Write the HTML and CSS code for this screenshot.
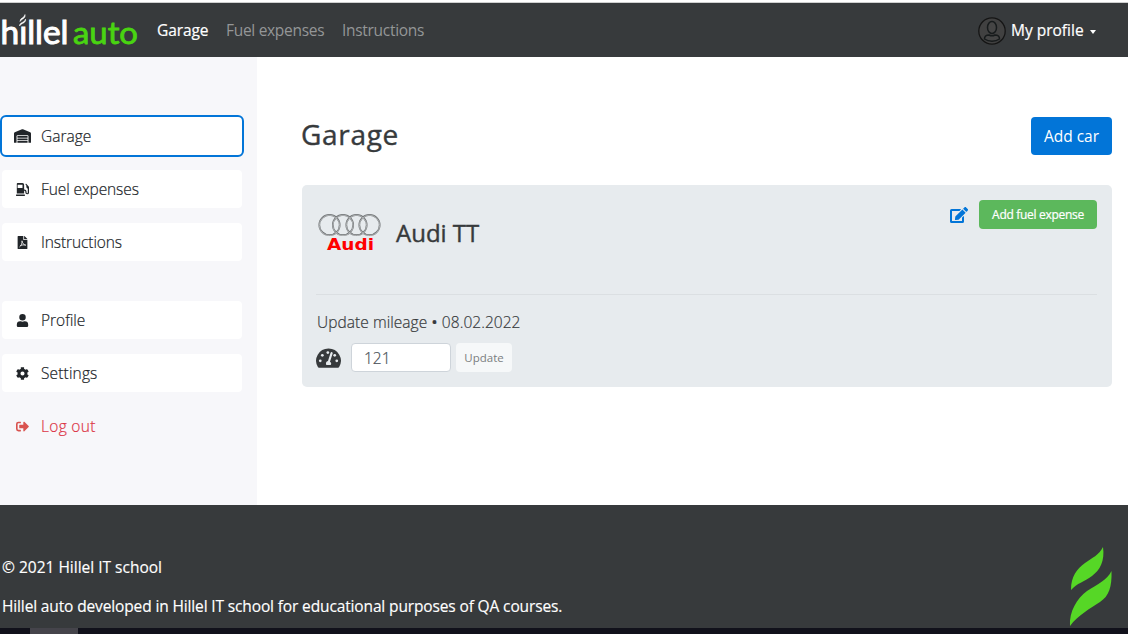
FILE: index.html
```
<!DOCTYPE html>
<html lang="en">
<head>
<meta charset="utf-8">
<title>Hillel auto</title>
<link rel="stylesheet" href="styles.css">
</head>
<body>
<header class="header">
  <a class="logo"><svg width="140" height="46" viewBox="0 -5 140 46">
    <g class="logo-text">
    <text x="0.500" y="30.500" textLength="68" lengthAdjust="spacingAndGlyphs" fill="#fff" stroke="#fff">hıllel</text>
    <text class="logo-auto" x="73" y="30.500" textLength="65" lengthAdjust="spacingAndGlyphs" fill="#49d411" stroke="#49d411">auto</text>
    </g>
    <path d="M20 8.500c0-4 4-3 5-7 1 4-3 4-5 7zM19.500 13c0-4 5-3 6-7 1 4-4 4-6 7z" fill="#fff" stroke="#fff" stroke-width=".5"/>
  </svg></a>
  <nav class="nav">
    <a class="nav-link on n-garage">Garage</a><a class="nav-link n-fuel">Fuel expenses</a><a class="nav-link n-inst">Instructions</a>
  </nav>
  <div class="account">
    <svg width="28" height="28" viewBox="0 0 28 28"><circle cx="14" cy="14" r="13.200" fill="#414141" stroke="#151515" stroke-width="1.300"/><g fill="#454545" stroke="#171b1c" stroke-width="1.500"><ellipse cx="14" cy="10.500" rx="4.500" ry="6"/><path d="M6.500 22c0-3 2-4 4.500-4 2 1 4 1 6 0 2.500 0 4.500 1 4.500 4-4 3-11 3-15 0z"/></g></svg>
    <span class="account-name">My profile</span><i class="caret"></i>
  </div>
</header>
<div class="body">
  <aside class="sidebar">
    <a class="item active"><svg class="ic wide" viewBox="0 0 640 512"><path d="M504 352H136a8 8 0 0 0-8 8v48a8 8 0 0 0 8 8h368a8 8 0 0 0 8-8v-48a8 8 0 0 0-8-8zm0 96H136a8 8 0 0 0-8 8v48a8 8 0 0 0 8 8h368a8 8 0 0 0 8-8v-48a8 8 0 0 0-8-8zm0-192H136a8 8 0 0 0-8 8v48a8 8 0 0 0 8 8h368a8 8 0 0 0 8-8v-48a8 8 0 0 0-8-8zm106-139L338 4a48 48 0 0 0-37 0L29 117a48 48 0 0 0-29 44v343a8 8 0 0 0 8 8h80a8 8 0 0 0 8-8V256c0-18 15-32 33-32h382c18 0 33 14 33 32v248a8 8 0 0 0 8 8h80a8 8 0 0 0 8-8V161a48 48 0 0 0-30-44z"/></svg><span class="s-garage">Garage</span></a>
    <a class="item"><svg class="ic" viewBox="0 0 512 512"><path fill-rule="evenodd" d="M336 448H16a16 16 0 0 0-16 16v32a16 16 0 0 0 16 16h320a16 16 0 0 0 16-16v-32a16 16 0 0 0-16-16zM64 0h192a64 64 0 0 1 64 64v192h8a88 88 0 0 1 88 88v32a24 24 0 0 0 48 0V223a64 64 0 0 1-56-63V96l-34-34a12 12 0 0 1 0-17l11-11a12 12 0 0 1 17 0l92 92c12 12 18 20 18 44v204a72 72 0 0 1-144 3v-33a40 40 0 0 0-40-40h-8v112H32V32A32 32 0 0 1 64 0zm0 64v128h192V64z"/></svg><span class="s-fuel">Fuel expenses</span></a>
    <a class="item"><svg class="ic" viewBox="-64 0 512 512"><path d="M224 136V0H24A24 24 0 0 0 0 24v464a24 24 0 0 0 24 24h336a24 24 0 0 0 24-24V160H248a24 24 0 0 1-24-24zm160-14v6H256V0h6a24 24 0 0 1 17 7l98 98a24 24 0 0 1 7 17z"/><path d="M174 205c22 74 52 136 132 156M84 426c58-38 91-110 90-221m-55 167c57-22 118-29 188-18" fill="none" stroke="#fff" stroke-width="31" stroke-linecap="round"/></svg><span class="s-inst">Instructions</span></a>
    <a class="item second"><svg class="ic" viewBox="-32 0 512 512"><path d="M224 256a128 128 0 1 0 0-256 128 128 0 0 0 0 256zm90 32h-17a174 174 0 0 1-146 0h-17A134 134 0 0 0 0 422v42a48 48 0 0 0 48 48h352a48 48 0 0 0 48-48v-42a134 134 0 0 0-134-134z"/></svg><span class="s-prof">Profile</span></a>
    <a class="item"><svg class="ic" viewBox="0 0 512 512"><path d="M487 316l-42-25a193 193 0 0 0 0-71l42-24c5-3 8-9 6-14-11-36-30-68-55-95-4-4-10-5-15-2l-43 24a190 190 0 0 0-61-35V25c0-6-4-11-10-12a224 224 0 0 0-110 0c-6 1-10 6-10 12v49a195 195 0 0 0-61 35L86 85c-5-3-11-2-15 2a223 223 0 0 0-55 95c-2 5 1 11 6 14l42 24a193 193 0 0 0 0 71l-42 25c-5 3-8 9-6 14 11 36 30 68 55 95 4 4 10 5 15 2l42-25a190 190 0 0 0 61 36v48c0 6 4 11 10 12a224 224 0 0 0 110 0c6-1 10-6 10-12v-48a195 195 0 0 0 61-36l42 25c5 3 11 2 15-2 25-27 44-59 56-95 2-5-1-11-6-14zM256 336a80 80 0 1 1 0-160 80 80 0 0 1 0 160z"/></svg><span class="s-set">Settings</span></a>
    <a class="item logout"><svg class="ic" viewBox="0 0 512 512"><path d="M497 273L329 441c-15 15-41 5-41-17v-96H152a24 24 0 0 1-24-24v-96a24 24 0 0 1 24-24h136V88c0-21 26-32 41-17l168 168a24 24 0 0 1 0 34zM192 436v-40a12 12 0 0 0-12-12H96a32 32 0 0 1-32-32V160a32 32 0 0 1 32-32h84a12 12 0 0 0 12-12V76a12 12 0 0 0-12-12H96a96 96 0 0 0-96 96v192a96 96 0 0 0 96 96h84a12 12 0 0 0 12-12z"/></svg><span class="s-out">Log out</span></a>
  </aside>
  <main class="main">
    <div class="heading"><h1>Garage</h1><button class="btn-add">Add car</button></div>
    <section class="card">
      <div class="card-top">
        <svg class="car-logo" width="64" height="64" viewBox="0 0 64 64">
          <g fill="none" stroke="#6f7274" stroke-width="1.700"><circle cx="12.500" cy="25" r="10.200"/><circle cx="26" cy="25" r="10.200"/><circle cx="39.500" cy="25" r="10.200"/><circle cx="52.500" cy="25" r="10.200"/></g>
          <g fill="none" stroke="#d5d8da" stroke-width=".6"><circle cx="12.500" cy="25.400" r="10.200"/><circle cx="26" cy="25.400" r="10.200"/><circle cx="39.500" cy="25.400" r="10.200"/><circle cx="52.500" cy="25.400" r="10.200"/></g>
          <text class="brand" x="10" y="50" textLength="47" lengthAdjust="spacingAndGlyphs">Audi</text>
        </svg>
        <h2>Audi TT</h2>
        <div class="actions"><svg width="18" height="16" viewBox="0 0 576 512"><path fill="#0275d8" d="M403 84l90 90c4 4 4 10 0 14L274 407l-93 10c-12 1-23-9-22-22l11-93L389 84c4-4 10-4 14 0zm162-23l-49-49c-15-15-40-15-55 0l-35 36c-4 4-4 10 0 14l90 90c4 4 10 4 14 0l35-36c16-15 16-40 0-55zM384 346v102H64V128h230c3 0 6-1 9-4l40-40c7-7 2-20-9-20H48a48 48 0 0 0-48 48v352a48 48 0 0 0 48 48h352a48 48 0 0 0 48-48V306c0-11-13-16-20-9l-40 40c-3 3-4 6-4 9z"/></svg><button class="btn-fuel">Add fuel expense</button></div>
      </div>
      <div class="mileage">
        <p class="update-label">Update mileage <b>•</b> 08.02.2022</p>
        <form class="form"><svg width="25" height="22" viewBox="0 0 576 512"><path fill="#373a3c" d="M288 32A288 288 0 0 0 41 468c5 8 15 12 25 12h444c10 0 20-4 25-12A288 288 0 0 0 288 32z"/><g fill="#e7ebee"><circle cx="96" cy="320" r="32"/><circle cx="144" cy="192" r="32"/><circle cx="272" cy="128" r="32"/><circle cx="432" cy="192" r="32"/><circle cx="480" cy="320" r="32"/><path d="M335 137c5-15 21-23 36-17 12 4 19 18 14 33l-63 190c34 20 36 54 17 73H237c-18-30-7-80 39-88z"/></g></svg><input class="miles" value="121"><button type="button" class="btn-update">Update</button></form>
      </div>
    </section>
  </main>
</div>
<footer class="footer">
  <div><p class="copy">© 2021 Hillel IT school</p><p class="about">Hillel auto developed in Hillel IT school for educational purposes of QA courses.</p></div>
  <svg width="44" height="80" viewBox="0 0 44 80"><path fill="#56d726" d="M34 0C36 14 31 23 23 29 15 35 8 36 2 43 2 29 8 22 16 16 23 11 30 8 34 0zM42.500 24C43 40 40 49 31 55 22 61 9 68 1 79 0 65 8 51 18 44 29 37 38 33 42.500 24z"/></svg>
</footer>
<div class="strip"><i></i></div>
</body>
</html>
```
FILE: styles.css
```
* { box-sizing: border-box; }
body { margin: 0; width: 1128px; height: 634px; overflow: hidden; display: flex; flex-direction: column; background: #fff; color: #212529; font: 15.500px/24px "Open Sans", "Noto Sans", sans-serif; border-top: 2px solid #fff; }
h1, h2, p { margin: 0; }
button { border: 0; border-radius: 4px; font-family: inherit; padding: 0; white-space: nowrap; }
svg { display: block; flex: none; }
span, h1, h2, p { white-space: nowrap; }
.header { height: 55px; flex: none; background: #373a3c; border-top: 1px solid #cfd0d0; display: flex; align-items: center; padding-top: 1px; }
.logo { width: 140px; height: 46px; }
.logo-text { font: 400 32.500px Lato, sans-serif; stroke-width: 1px; }
.logo-auto { font-size: 30.500px; stroke-width: .8px; }
.nav { display: flex; margin-left: 17px; gap: 18px; }
.nav-link { color: #949697; white-space: nowrap; letter-spacing: -.3px; margin-top: -1px; }
.nav-link.on { color: #fff; letter-spacing: -.1px; -webkit-text-stroke: .2px; }
.n-garage { width: 51px; }
.n-fuel { width: 98px; }
.n-inst { width: 84px; }
.account { margin-left: auto; margin-right: 32px; display: flex; align-items: center; color: #fff; -webkit-text-stroke: .2px; }
.account-name { margin: -1px 0 0 5px; width: 75px; }
.caret { margin-left: 4px; border: 3.500px solid transparent; border-top: 4px solid #fff; border-bottom: 0; margin-top: 2px; }
.body { display: flex; height: 448px; flex: none; }
.sidebar { width: 257px; background: #f7f7fa; padding: 58px 13px 0 0; display: flex; flex-direction: column; gap: 11px; }
.item { height: 42px; border: 2px solid transparent; border-radius: 6px; background: #fff; background-clip: padding-box; display: flex; align-items: center; padding: 0 0 0 12px; font-weight: 300; -webkit-text-stroke: .2px; }
.item.active { border-color: #0275d8; }
.item.second { margin-top: 25px; }
.ic { width: 13px; height: 13px; margin: 0 12px 0 2px; fill: #212529; }
.ic.wide { width: 17px; height: 14px; margin: 0 10px 0 0; }
.s-fuel, .s-inst { letter-spacing: -.1px; }
.s-set { letter-spacing: .15px; }
.s-out { letter-spacing: .3px; }
.logout { background: none; color: #dc3545; }
.logout .ic { fill: #d9534f; }
.main { flex: 1; padding: 60px 16px 0 45px; }
.heading { display: flex; justify-content: space-between; height: 38px; }
h1 { font-size: 28px; line-height: 35px; font-weight: 500; color: #373a3c; letter-spacing: .7px; margin-left: -1px; }
.btn-add { width: 81px; height: 38px; background: #0275d8; color: #fff; font-size: 15.500px; }
.card { margin-top: 30px; height: 202px; background: #e7ebee; border-radius: 5px; padding: 15px 15px 15px 14px; color: #373a3c; }
.card-top { height: 95px; border-bottom: 1px solid #dbdfe2; display: flex; padding-left: 1px; }
h2 { font-size: 24px; line-height: 30px; font-weight: 500; margin: 18px 0 0 15px; }
h1, h2 { -webkit-text-stroke: .4px; }
.brand { font: 700 15px "DejaVu Sans", sans-serif; fill: #f00; }
.actions { margin-left: auto; height: 29px; display: flex; align-items: center; gap: 11px; }
.actions svg { margin-top: 1px; }
.btn-fuel { width: 118px; height: 29px; background: #5cb85c; color: #fff; font-size: 12px; letter-spacing: -.3px; -webkit-text-stroke: .2px; }
.update-label { margin: 15px 0 0 1px; font-weight: 300; letter-spacing: .05px; -webkit-text-stroke: .2px; }
.update-label b { font-size: 17px; line-height: 20px; }
.form { display: flex; align-items: center; height: 29px; margin-top: 9px; }
.miles { width: 100px; height: 29px; margin: 0 5px 0 10px; border: 1px solid #ced4da; border-radius: 4px; padding: 1px 12px; font: 300 15.500px "Open Sans", sans-serif; color: #495057; -webkit-text-stroke: .2px; }
.btn-update { width: 56px; height: 29px; background: #f6f8f9; color: #7b7e80; font-size: 11.500px; }
.footer { height: 123px; flex: none; background: #373a3c; color: #fff; display: flex; justify-content: space-between; align-items: flex-start; padding: 42px 15px 0 2px; }
.footer p { height: 39px; line-height: 40px; -webkit-text-stroke: .15px; }
.about { letter-spacing: -.135px; }
.strip { height: 6px; flex: none; background: #11111b; padding-left: 30px; }
.strip i { display: block; width: 48px; height: 6px; background: #45444b; }
```
